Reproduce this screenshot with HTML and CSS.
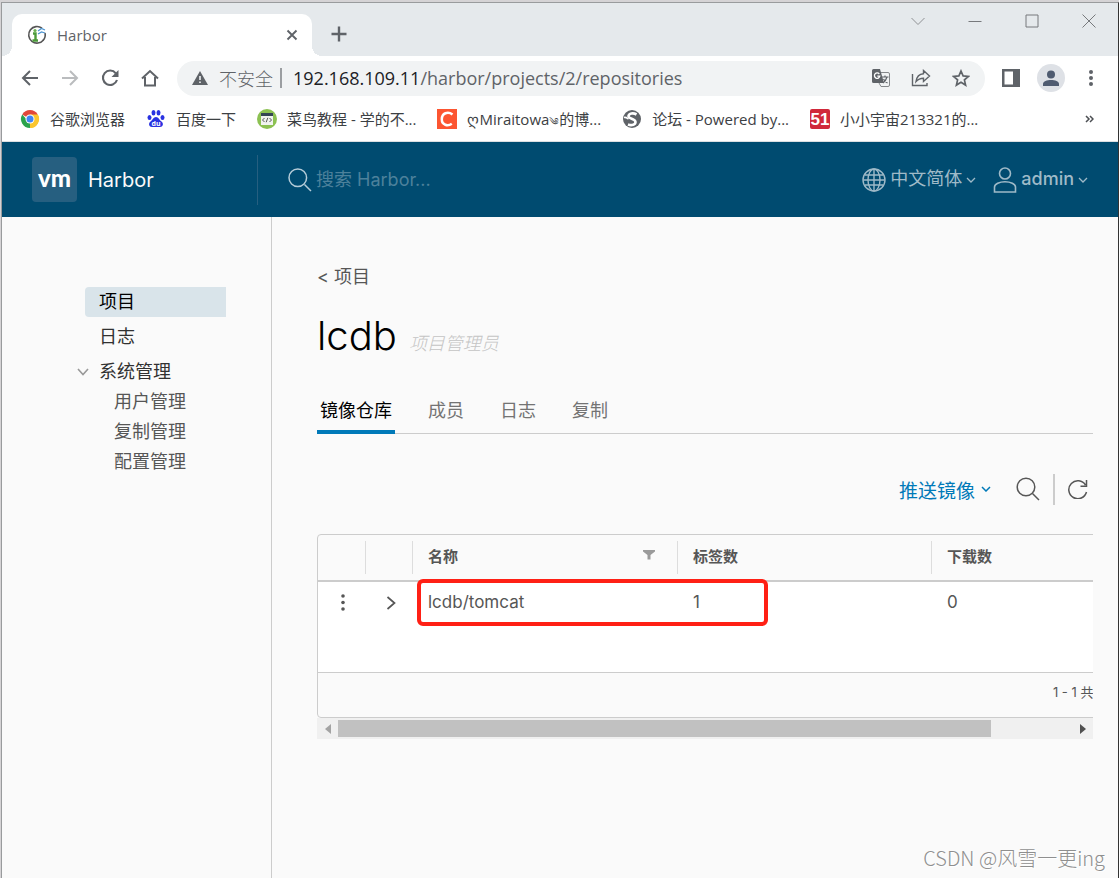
FILE: index.html
```html
<!DOCTYPE html>
<html lang="zh-CN">
<head>
<meta charset="utf-8">
<meta name="viewport" content="width=device-width, initial-scale=1">
<title>Harbor</title>
<link rel="stylesheet" href="styles.css">
</head>
<body>
<div class="window">
  <div class="tab-strip">
    <div class="tab">
      <svg class="tab-icon" width="20" height="20" viewBox="0 0 20 20" fill="none">
        <path d="M15 3.200A8.300 8.300 0 1 0 16.500 15" stroke="#555" stroke-width="1.600"/>
        <path d="M18 8A8.300 8.300 0 0 1 16 15.500" stroke="#555" stroke-width="1.600"/>
        <path d="M6 8.500h2.500v7M5.500 15.500h5.500" stroke="#4c9a3b" stroke-width="2.400"/><circle cx="8" cy="5.500" r="1.600" fill="#6bb14f"/>
        <path d="M11 6l3.500-2.500L18 5M11 9l3.500-2L18 8" stroke="#4d94cf" stroke-width="1.300"/>
      </svg>
      <span class="tab-title">Harbor</span>
      <button class="icon-button tab-close" aria-label="关闭标签页"><svg width="12" height="12" viewBox="0 0 12 12"><path d="M1.500 1.500l9 9M10.500 1.500l-9 9" stroke="#5f6368" stroke-width="1.900"/></svg></button>
    </div>
    <button class="icon-button new-tab" aria-label="新标签页"><svg width="16" height="16" viewBox="0 0 16 16"><path d="M8 .5v15M.5 8h15" stroke="#5f6368" stroke-width="2.400"/></svg></button>
    <div class="window-controls">
      <button class="icon-button" aria-label="搜索标签页"><svg width="14" height="14" viewBox="0 0 14 14" fill="none"><path d="M.5 4L7 10.500 13.500 4" stroke="#8e9093"/></svg></button>
      <button class="icon-button" aria-label="最小化"><svg width="14" height="14" viewBox="0 0 14 14"><path d="M.5 7.500h13" stroke="#77797c"/></svg></button>
      <button class="icon-button" aria-label="最大化"><svg width="14" height="14" viewBox="0 0 14 14" fill="none"><path d="M1 1h12v12H1z" stroke="#77797c"/></svg></button>
      <button class="icon-button" aria-label="关闭"><svg width="14" height="14" viewBox="0 0 14 14"><path d="M.5.5l13 13M13.500.5l-13 13" stroke="#77797c"/></svg></button>
    </div>
  </div>

  <div class="toolbar">
    <button class="icon-button tool" aria-label="后退"><svg width="18" height="18" viewBox="0 0 18 18" fill="none"><path d="M17 9H2M9 2L2 9l7 7" stroke="#5f6368" stroke-width="2"/></svg></button>
    <button class="icon-button tool" aria-label="前进"><svg width="18" height="18" viewBox="0 0 18 18" fill="none"><path d="M1 9h15M9 2l7 7-7 7" stroke="#babcbe" stroke-width="2"/></svg></button>
    <button class="icon-button tool" aria-label="重新加载"><svg width="18" height="18" viewBox="0 0 18 18" fill="none"><path d="M14.800 4.300A7.200 7.200 0 1 0 16 11" stroke="#5f6368" stroke-width="2.100"/><path d="M17.500 1v7h-7z" fill="#5f6368"/></svg></button>
    <button class="icon-button tool" aria-label="主页"><svg width="18" height="18" viewBox="0 0 18 18" fill="none"><path d="M1 9.500L9 2l8 7.500M4 8v8.500h10V8" stroke="#5f6368" stroke-width="2"/></svg></button>
    <div class="omnibox">
      <svg width="16" height="14" viewBox="0 0 16 14"><path d="M8 0l8 14H0z" fill="#5f6368"/><path d="M8 5v4M8 10.500v1.600" stroke="#f1f3f4" stroke-width="1.600"/></svg>
      <span class="security">不安全</span>
      <span class="omnibox-divider"></span>
      <span class="url"><span class="host">192.168.109.11</span>/harbor/projects/2/repositories</span>
      <span class="omnibox-actions">
        <button class="icon-button tool" aria-label="翻译"><svg width="18" height="18" viewBox="0 0 18 18" fill="none"><path d="M7.500 3.500H16a1.500 1.500 0 0 1 1.500 1.500v11a1.500 1.500 0 0 1-1.500 1.500H9L7 14" stroke="#85888b" fill="#f1f3f4"/><path d="M1.500 0H8l4 14H1.500A1.500 1.500 0 0 1 0 12.500v-11A1.500 1.500 0 0 1 1.500 0z" fill="#5f6368"/><path d="M7.300 5A2.700 2.700 0 1 0 7.800 7.200H5.300" stroke="#fff" stroke-width="1.300"/><path d="M10 8h6.500M13 6.500V8M15 8c-.7 2.500-2 4.300-4 6M11.500 10c1 2 2.500 3.300 4 4" stroke="#5f6368" stroke-width="1.200"/></svg></button>
        <button class="icon-button tool" aria-label="分享"><svg width="20" height="18" viewBox="0 0 20 18" fill="none"><path d="M1.500 5v11.500H16V14" stroke="#5f6368" stroke-width="1.400"/><path d="M5 12.500c.7-5 3.500-7.500 7.500-7.800V1.500L18.500 7l-6 5.500V9.200c-3.500 0-5.500 1-7.500 3.300z" stroke="#5f6368" stroke-width="1.400"/></svg></button>
        <button class="icon-button tool" aria-label="为此标签页添加书签"><svg width="18" height="18" viewBox="0 0 18 18" fill="none"><path d="M9 2l2.100 4.900 5.300.5-4 3.500 1.200 5.200L9 13.300l-4.600 2.800 1.200-5.200-4-3.500 5.300-.5z" stroke="#5f6368" stroke-width="1.700"/></svg></button>
      </span>
    </div>
    <button class="icon-button tool" aria-label="侧边栏"><svg width="18" height="18" viewBox="0 0 18 18"><path d="M0 0h18v18H0zM2.500 2.500v13H11v-13z" fill="#5f6368" fill-rule="evenodd"/></svg></button>
    <button class="icon-button tool" aria-label="个人资料"><svg width="28" height="28" viewBox="0 0 28 28"><circle cx="14" cy="14" r="14" fill="#dee1e6"/><circle cx="14" cy="10.500" r="4" fill="#4f5b70"/><path d="M6 22v-2c0-2.800 4-4 8-4s8 1.200 8 4v2z" fill="#4f5b70"/></svg></button>
    <button class="icon-button tool" aria-label="菜单"><svg width="4" height="18" viewBox="0 0 4 18" fill="#5f6368"><circle cx="2" cy="3" r="2"/><circle cx="2" cy="9" r="2"/><circle cx="2" cy="15" r="2"/></svg></button>
  </div>

  <nav class="bookmarks" aria-label="书签">
    <a class="bookmark" href="#"><svg width="20" height="20" viewBox="0 0 20 20"><path d="M10 10L2.200 5.500A9 9 0 0 1 17.800 5.500z" fill="#e2473b"/><path d="M10 10l7.800-4.500A9 9 0 0 1 10 19z" fill="#fbc62f"/><path d="M10 19A9 9 0 0 1 2.200 5.500L10 14z" fill="#2ba24c"/><path d="M10 5.500h7.800A9 9 0 0 1 10 19l4-7z" fill="#fbc62f"/><circle cx="10" cy="10" r="4.500" fill="#fff"/><circle cx="10" cy="10" r="3.500" fill="#4285f4"/></svg><span>谷歌浏览器</span></a>
    <a class="bookmark" href="#"><svg width="20" height="20" viewBox="0 0 20 20" fill="#2932e1"><ellipse cx="3.500" cy="8.500" rx="2" ry="2.500"/><ellipse cx="7.500" cy="3.800" rx="2" ry="2.700"/><ellipse cx="12.500" cy="3.800" rx="2" ry="2.700"/><ellipse cx="16.500" cy="8.500" rx="2" ry="2.500"/><path d="M10 8c2.500 0 3.500 3 5.500 4.500 2.500 2 1.500 5.500-1.500 5.500H6c-3 0-4-3.500-1.500-5.500C6.500 11 7.500 8 10 8z"/><text class="paw-text" x="10" y="16.500" text-anchor="middle" fill="#fff">du</text></svg><span>百度一下</span></a>
    <a class="bookmark" href="#"><svg width="20" height="20" viewBox="0 0 20 20" fill="none"><circle cx="10" cy="10" r="10" fill="#8cc152"/><path d="M4 4h12v12H4z" fill="#f1f3f0"/><path d="M4 4h12v3H4z" fill="#344454"/><path d="M7.500 9L5.500 11l2 2M12.500 9l2 2-2 2M10.800 8.800L9.200 13.200" stroke="#555"/></svg><span>菜鸟教程 - 学的不...</span></a>
    <a class="bookmark" href="#"><svg width="20" height="20" viewBox="0 0 20 20" fill="none"><path d="M0 0h20v20H0z" fill="#fc5531"/><path d="M15.500 5.500C11 2 4.800 4 4.800 10.300c0 5.800 6 7.200 10 4.400" stroke="#fff" stroke-width="2.500"/></svg><span>ღMiraitowa<span class="ornament">༄</span>的博...</span></a>
    <a class="bookmark" href="#"><svg width="20" height="20" viewBox="0 0 20 20" fill="none"><circle cx="10" cy="10" r="9" fill="#5f6368"/><path d="M14.500 5.500C11 3.500 7 4.500 6.500 7c-.5 3 7 2.500 7 6 0 2.500-3.500 4-7.500 2.500" stroke="#fff" stroke-width="2.600"/><path d="M2 8.500c2-.5 3 .5 4.500 1.500" stroke="#fff" stroke-width="1.600"/></svg><span>论坛 - Powered by...</span></a>
    <a class="bookmark" href="#"><svg width="20" height="20" viewBox="0 0 20 20"><rect width="20" height="20" rx="2" fill="#d0283a"/><text class="badge-text" x="10" y="16" text-anchor="middle" fill="#fff">51</text></svg><span>小小宇宙213321的...</span></a>
    <button class="icon-button more" aria-label="更多书签"><svg width="9" height="8" viewBox="0 0 9 8" fill="none"><path d="M1 1l3 3-3 3M5 1l3 3-3 3" stroke="#4c4f53" stroke-width="1.500"/></svg></button>
  </nav>

  <header class="header">
    <a class="brand" href="#"><span class="logo">vm</span><span>Harbor</span></a>
    <label class="search">
      <svg width="24" height="24" viewBox="0 0 24 24" fill="none" stroke="#b5ccd8" stroke-width="1.500"><circle cx="9.800" cy="9.800" r="8.800"/><path d="M16.500 16.500L23 23"/></svg>
      <input type="text" placeholder="搜索 Harbor..." aria-label="搜索 Harbor">
    </label>
    <button class="header-menu">
      <svg width="24" height="24" viewBox="0 0 24 24" fill="none" stroke="#9fbac8" stroke-width="1.400"><circle cx="12" cy="12" r="11"/><ellipse cx="12" cy="12" rx="6" ry="11"/><path d="M12 1v22M1 12h22M3 7h18M3 17h18"/></svg>
      <span>中文简体</span>
      <svg width="10" height="6" viewBox="0 0 10 6" fill="none"><path d="M1 1l4 4 4-4" stroke="#9fbac8" stroke-width="1.300"/></svg>
    </button>
    <button class="header-menu user">
      <svg width="24" height="26" viewBox="0 0 24 26" fill="none" stroke="#9fbac8" stroke-width="1.600"><circle cx="12" cy="6.500" r="5.500"/><path d="M1.500 25v-5c0-3 5-5.200 10.500-5.200s10.500 2.200 10.500 5.200v5z"/></svg>
      <span>admin</span>
      <svg width="10" height="6" viewBox="0 0 10 6" fill="none"><path d="M1 1l4 4 4-4" stroke="#9fbac8" stroke-width="1.300"/></svg>
    </button>
  </header>

  <div class="content">
    <nav class="sidebar" aria-label="主导航">
      <a class="nav-item active" href="#">项目</a>
      <a class="nav-item" href="#">日志</a>
      <div class="nav-group">
        <button class="group-toggle"><svg width="12" height="8" viewBox="0 0 12 8" fill="none"><path d="M1 1l5 5.500L11 1" stroke="#999" stroke-width="1.600"/></svg><span>系统管理</span></button>
        <a class="nav-child" href="#">用户管理</a>
        <a class="nav-child" href="#">复制管理</a>
        <a class="nav-child" href="#">配置管理</a>
      </div>
    </nav>

    <main class="main">
      <a class="back-link" href="#">&lt; 项目</a>
      <div class="title-row"><h1>lcdb</h1><em>项目管理员</em></div>
      <div class="tabs" role="tablist">
        <button class="page-tab selected" role="tab" aria-selected="true">镜像仓库</button>
        <button class="page-tab" role="tab">成员</button>
        <button class="page-tab" role="tab">日志</button>
        <button class="page-tab" role="tab">复制</button>
      </div>
      <div class="actions">
        <button class="push"><span>推送镜像</span><svg width="10" height="6" viewBox="0 0 10 6" fill="none"><path d="M1 1l4 4 4-4" stroke="#0079b8" stroke-width="1.500"/></svg></button>
        <button class="icon-button find" aria-label="搜索"><svg width="24" height="24" viewBox="0 0 24 24" fill="none" stroke="#565656" stroke-width="1.500"><circle cx="10" cy="10" r="8.800"/><path d="M16.500 16.500L23 23"/></svg></button>
        <span class="actions-divider"></span>
        <button class="icon-button refresh" aria-label="刷新"><svg width="20" height="20" viewBox="0 0 20 20" fill="none" stroke="#565656" stroke-width="1.500"><path d="M17.500 6A9 9 0 1 0 18.500 13M18.500 1v6.200h-6"/></svg></button>
      </div>
      <div class="grid-view">
        <div class="grid">
          <table>
            <colgroup><col class="col-action"><col class="col-expand"><col class="col-name"><col class="col-tags"><col></colgroup>
            <thead>
              <tr><th></th><th></th><th><div class="th-content">名称<button class="icon-button" aria-label="筛选"><svg width="12" height="10" viewBox="0 0 12 10"><path d="M0 0h12v1.500L7.500 5v4.500h-3V5L0 1.500z" fill="#9a9a9a"/></svg></button></div></th><th>标签数</th><th>下载数</th></tr>
            </thead>
            <tbody>
              <tr>
                <td class="center"><button class="icon-button" aria-label="操作"><svg width="4" height="17" viewBox="0 0 4 17" fill="#565656"><circle cx="2" cy="2" r="1.800"/><circle cx="2" cy="8.500" r="1.800"/><circle cx="2" cy="15" r="1.800"/></svg></button></td>
                <td class="center"><button class="icon-button" aria-label="展开"><svg width="10" height="14" viewBox="0 0 10 14" fill="none"><path d="M1.500 1l7 6-7 6" stroke="#565656" stroke-width="1.700"/></svg></button></td>
                <td>lcdb/tomcat</td><td>1</td><td>0</td>
              </tr>
            </tbody>
          </table>
          <div class="grid-footer">1 - 1 共计 1 条记录</div>
        </div>
        <div class="highlight"></div>
      </div>
      <div class="scrollbar">
        <button class="icon-button scroll-arrow" aria-label="向左滚动"><svg width="6" height="10" viewBox="0 0 6 10"><path d="M6 0v10L0 5z" fill="#a3a3a3"/></svg></button>
        <div class="track"><div class="thumb"></div></div>
        <button class="icon-button scroll-arrow" aria-label="向右滚动"><svg width="6" height="10" viewBox="0 0 6 10"><path d="M0 0v10l6-5z" fill="#505050"/></svg></button>
      </div>
    </main>
  </div>
  <div class="watermark">CSDN @风雪一更ing</div>
</div>
</body>
</html>
```
FILE: styles.css
```css
* { box-sizing: border-box; }

body {
  margin: 0;
  padding: 2px 0 0 1px;
  background: #d5d3d5;
  font-family: Inter, "Noto Sans CJK SC", sans-serif;
}

a { color: inherit; text-decoration: none; }

button {
  margin: 0;
  padding: 0;
  border: 0;
  background: none;
  color: inherit;
  font: inherit;
}

svg { display: block; flex: none; }

.icon-button { display: flex; align-items: center; justify-content: center; }

.window {
  position: relative;
  display: flex;
  flex-direction: column;
  min-height: calc(100vh - 2px);
  border: 1px solid #999b9d;
  border-right-color: #333;
  border-bottom: 0;
  background: #fafafa;
}

/* Browser chrome */
.tab-strip {
  display: flex;
  height: 53px;
  padding-left: 10px;
  background: #e5e9ec;
}

.tab {
  position: relative;
  display: flex;
  align-items: center;
  width: 300px;
  margin-top: 11px;
  padding: 0 14px 0 15px;
  border-radius: 10px 10px 0 0;
  background: #fff;
  font: 15px "Open Sans", sans-serif;
  color: #5f6368;
}

.tab::before,
.tab::after {
  content: "";
  position: absolute;
  bottom: 0;
  width: 10px;
  height: 10px;
}

.tab::before { right: 100%; background: radial-gradient(circle at 0 0, #e5e9ec 10px, #fff 10px); }
.tab::after { left: 100%; background: radial-gradient(circle at 100% 0, #e5e9ec 10px, #fff 10px); }
.tab-title { flex: 1; margin-left: 10px; }
.new-tab { width: 28px; height: 28px; margin: 17px 0 0 13px; }

.window-controls { display: flex; height: 36px; margin-left: auto; padding-right: 1px; }
.window-controls button { width: 57px; }

.toolbar {
  display: flex;
  align-items: center;
  height: 44px;
  padding: 0 7px 0 8px;
  background: #fff;
}

.tool { flex: none; width: 40px; height: 34px; }

.omnibox {
  display: flex;
  flex: 1;
  align-items: center;
  min-width: 0;
  height: 35px;
  margin: 0 6px 0 7px;
  padding: 0 4px 0 15px;
  border-radius: 18px;
  background: #f1f3f4;
  font: 18px "Open Sans", "Noto Sans CJK SC", sans-serif;
  color: #5f6368;
}

.security { margin-left: 11px; font-family: "Noto Sans CJK SC", sans-serif; font-weight: 300; }
.omnibox-divider { width: 2px; height: 20px; margin: 0 11px 0 7px; background: #9b9ea1; }
.url { overflow: hidden; white-space: nowrap; }
.host { color: #202124; }
.omnibox-actions { display: flex; margin-left: auto; }

.bookmarks {
  display: flex;
  align-items: center;
  gap: 21px;
  height: 42px;
  padding: 0 24px 4px 18px;
  border-bottom: 1px solid #dcdfe1;
  background: #fff;
  font: 15px/20px "Open Sans", "Noto Sans CJK SC", sans-serif;
  color: #3c4043;
}

.bookmark { display: flex; align-items: center; gap: 10px; white-space: nowrap; }
.bookmark > span { height: 20px; }
.ornament { font-size: 10px; line-height: 1; }
.more { margin-left: auto; }
.paw-text { font: bold 7px "Open Sans", sans-serif; }
.badge-text { font: bold 17px "Liberation Sans", sans-serif; }

/* Application header */
.header {
  display: flex;
  align-items: center;
  height: 75px;
  padding: 0 30px;
  background: #004b70;
  font-size: 18px;
  color: #9fbac8;
}

.brand {
  display: flex;
  align-items: center;
  gap: 11px;
  width: 226px;
  height: 50px;
  border-right: 1px solid #265f80;
  font-size: 20px;
  color: #fafafa;
}

.logo {
  width: 45px;
  height: 45px;
  border-radius: 4px;
  background: #265f80;
  font: 900 24px/42px Lato, sans-serif;
  text-align: center;
  color: #fff;
}

.search { display: flex; flex: 1; align-items: center; gap: 4px; margin-left: 30px; }

.search input {
  flex: 1;
  min-width: 0;
  padding: 0;
  border: 0;
  outline: 0;
  background: none;
  font: 18px Inter, "Noto Sans CJK SC", sans-serif;
  color: #fff;
}

.search input::placeholder { color: #4d819b; }
.header-menu { display: flex; align-items: center; gap: 4px; line-height: 24px; }
.header-menu span { padding-bottom: 2px; }
.user { margin-left: 17px; font-weight: 500; }

/* Page */
.content { display: flex; flex: 1; }

.sidebar {
  display: flex;
  flex: none;
  flex-direction: column;
  gap: 5px;
  width: 270px;
  padding: 70px 45px 0 83px;
  border-right: 1px solid #ccc;
  font-size: 18px;
  line-height: 30px;
  color: #313131;
}

.nav-item { padding-left: 14px; }
.nav-item.active { border-radius: 4px 0 0 4px; background: #d9e4ea; color: #000; }
.group-toggle { display: flex; align-items: center; gap: 10px; margin-left: -8px; }
.nav-child { display: block; padding-left: 29px; color: #565656; }

.main { flex: 1; min-width: 0; padding: 45px 25px 0 45px; color: #565656; }
.back-link { display: block; font-size: 18px; line-height: 30px; }
.title-row { display: flex; align-items: baseline; gap: 12px; margin-top: 19px; line-height: 50px; }
.title-row h1 { margin: 0; font-size: 40px; font-weight: 300; color: #000; }
.title-row em { font-size: 18px; font-weight: 300; color: #c4c4c4; }

.tabs {
  display: flex;
  gap: 30px;
  margin-top: 22px;
  box-shadow: inset 0 -1px #ccc;
  font-size: 18px;
  color: #737373;
}

.page-tab { height: 43px; padding: 0 3px 3px; border-bottom: 4px solid transparent; }
.page-tab.selected { border-color: #0079b8; color: #000; }

.actions { display: flex; align-items: center; justify-content: flex-end; height: 32px; margin-top: 39px; padding-right: 5px; }
.push { display: flex; align-items: center; gap: 6px; font-size: 19px; color: #0079b8; }
.find { margin: 0 13px 0 25px; }
.actions-divider { width: 2px; height: 31px; margin-right: 13px; background: #ccc; }

.grid-view { position: relative; margin-top: 29px; overflow: hidden; }
.grid { width: 871px; border: 1px solid #ccc; border-radius: 4px; font-size: 17px; }
.grid table { width: 100%; border-collapse: collapse; table-layout: fixed; }
.col-action { width: 48px; }
.col-expand { width: 47px; }
.col-name { width: 265px; }
.col-tags { width: 254px; }
th { height: 46px; padding: 0 15px 5px; border-bottom: 2px solid #ccc; background: linear-gradient(#ddd, #ddd) right 6px / 1px 33px no-repeat; font-size: 15px; text-align: left; }
th:last-child { background: none; }
.th-content { display: flex; align-items: center; justify-content: space-between; padding-right: 8px; }
tbody { background: #fff; }
td { height: 91px; padding: 9px 15px 0; line-height: 22px; vertical-align: top; }
.center { padding: 12px 0 0; }
.center button { width: 50px; height: 17px; }
.grid-footer { height: 45px; padding-right: 29px; border-top: 1px solid #ccc; font-size: 13px; line-height: 39px; text-align: right; }

/* Frame drawn round the repository name and its tag count */
.highlight {
  position: absolute;
  top: 45px;
  left: 100px;
  width: 351px;
  height: 47px;
  border: 4px solid #ff2015;
  border-radius: 6px;
}

.scrollbar { display: flex; height: 21px; background: #f0f0f0; }
.scroll-arrow { width: 21px; height: 21px; }
.track { flex: 1; padding: 2px 0; }
.thumb { width: 89%; height: 17px; background: #c1c1c1; }

.watermark {
  position: absolute;
  right: 13px;
  bottom: 6px;
  font: 300 20px/28px "Noto Sans CJK SC", sans-serif;
  color: #8f8f8f;
  text-shadow: 1px 1px #fff;
}
```
